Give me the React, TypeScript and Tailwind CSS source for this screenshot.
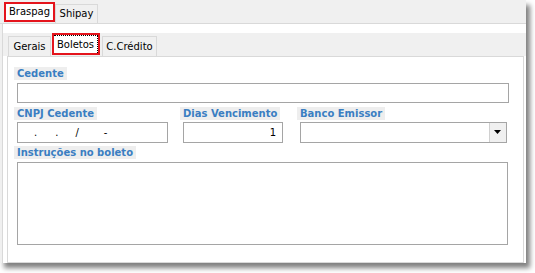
import React from 'react';

const font = "font-['DejaVu_Sans',sans-serif]";

function Label({ text, className = '' }: { text: string; className?: string }) {
  return (
    <div className={`-ml-[3px] self-start h-[13px] px-[3px] bg-[#eeeeee] text-[10px] font-bold leading-[13px] text-[#3a7ec2] ${className}`}>
      {text}
    </div>
  );
}

export default function App() {
  return (
    <div className={`w-[535px] h-[273px] bg-white ${font} text-[10px] text-black`}>
      <div className="w-[526px] h-[263px] bg-[#f0f0f0] shadow-[4px_5px_5px_rgba(0,0,0,0.5)] flex flex-col">
        {/* outer tabs */}
        <div className="h-[24px] shrink-0 flex items-end pl-[4px] border-b border-[#d9d9d9]">
          <div className="h-[20px] w-[51px] border-2 border-[#e4141c] bg-white flex items-center justify-center leading-none mb-[1px]">
            Braspag
          </div>
          <div className="h-[19px] w-[43px] border border-b-0 border-[#d9d9d9] bg-[#f0f0f0] flex items-center justify-center leading-none">
            Shipay
          </div>
        </div>

        {/* outer page */}
        <div className="flex-1 flex flex-col bg-white ml-[2px] border-l border-[#d9d9d9] pt-[9px]">
          {/* inner tabs */}
          <div className="h-[23px] shrink-0 flex items-end pl-[5px] bg-[#f0f0f0]">
            <div className="h-[20px] w-[43px] border border-b-0 border-[#d9d9d9] bg-[#f0f0f0] flex items-center justify-center leading-none">
              Gerais
            </div>
            <div className="h-[22px] w-[48px] ml-[1px] mb-[1px] border-2 border-[#e4141c] bg-white flex">
              <div className="flex-1 border-t border-r border-dotted border-black flex items-center justify-center leading-none">
                Boletos
              </div>
            </div>
            <div className="h-[20px] w-[55px] ml-[2px] border border-b-0 border-[#d9d9d9] bg-[#f0f0f0] flex items-center justify-center leading-none">
              C.Crédito
            </div>
          </div>

          {/* inner page */}
          <div className="flex-1 flex flex-col bg-white ml-[4px] mr-[2px] border border-[#d9d9d9] pl-[9px] pt-[10px]">
            <Label text="Cedente" />
            <div className="mt-[3px] h-[20px] w-[492px] border border-[#a5a5a5] bg-white" />

            <div className="mt-[4px] flex">
              <div className="flex flex-col w-[151px]">
                <Label text="CNPJ Cedente" />
                <div className="mt-[2px] h-[21px] border border-[#a5a5a5] bg-white flex items-center text-[10px] leading-none">
                  <span className="ml-[16px]">.</span>
                  <span className="ml-[18px]">.</span>
                  <span className="ml-[17px]">/</span>
                  <span className="ml-[25px]">-</span>
                </div>
              </div>
              <div className="flex flex-col w-[100px] ml-[15px]">
                <Label text="Dias Vencimento" />
                <div className="mt-[2px] h-[21px] border border-[#a5a5a5] bg-white flex items-center justify-end pr-[6px] leading-none">
                  1
                </div>
              </div>
              <div className="flex flex-col w-[207px] ml-[17px]">
                <Label text="Banco Emissor" />
                <div className="mt-[2px] h-[21px] border border-[#a5a5a5] bg-white flex justify-end">
                  <div className="w-[17px] bg-[#f0f0f0] border-l border-[#d0d0d0] flex items-center justify-center">
                    <svg width="8" height="5" viewBox="0 0 8 5">
                      <path d="M0 0h7L3.5 4z" fill="#000" />
                    </svg>
                  </div>
                </div>
              </div>
            </div>

            <Label text="Instruções no boleto" className="mt-[3px]" />
            <div className="mt-[3px] h-[83px] w-[491px] border border-[#a5a5a5] bg-white" />
          </div>
        </div>
      </div>
    </div>
  );
}
